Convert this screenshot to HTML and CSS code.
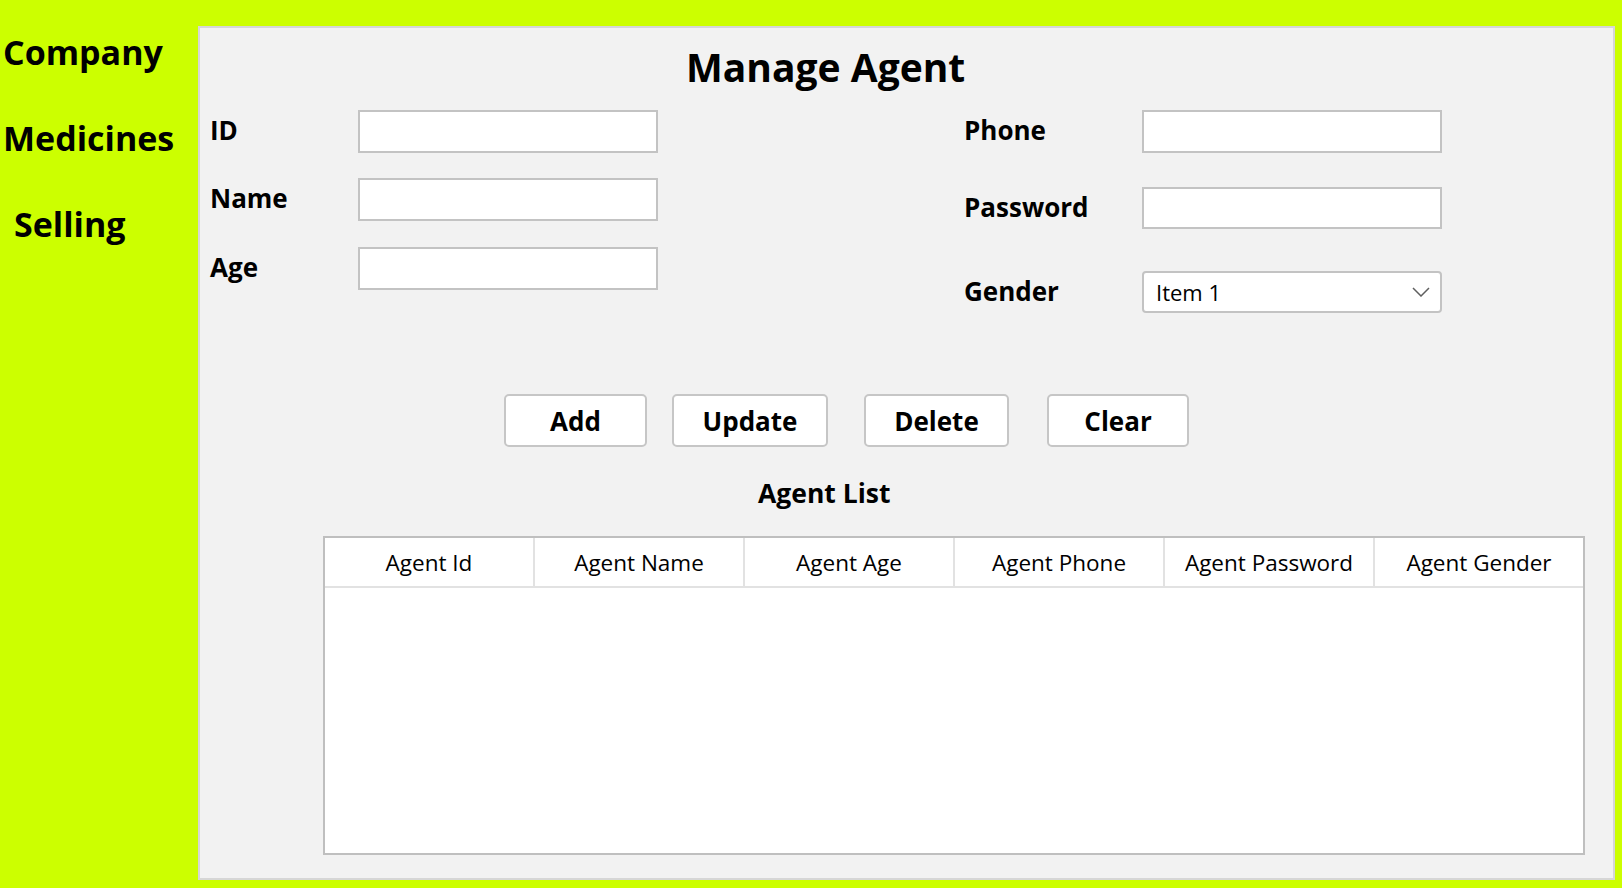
FILE: index.html
```html
<!DOCTYPE html>
<html lang="en">
<head>
<meta charset="utf-8">
<title>Manage Agent</title>
<link rel="stylesheet" href="styles.css">
</head>
<body>
<div class="app">
  <nav class="sidebar">
    <div class="nav-item">Company</div>
    <div class="nav-item">Medicines</div>
    <div class="nav-item nav-indent">Selling</div>
  </nav>
  <main class="panel">
    <h1 class="title">Manage Agent</h1>
    <div class="form">
      <div class="col col-left">
        <div class="row row-l1"><label class="label lbl-left">ID</label><div class="input"></div></div>
        <div class="row row-l2"><label class="label lbl-left">Name</label><div class="input"></div></div>
        <div class="row row-l3"><label class="label lbl-left">Age</label><div class="input"></div></div>
      </div>
      <div class="col col-right">
        <div class="row row-r1"><label class="label lbl-right">Phone</label><div class="input"></div></div>
        <div class="row row-r2"><label class="label lbl-right">Password</label><div class="input"></div></div>
        <div class="row row-r3"><label class="label lbl-right">Gender</label>
          <div class="combo"><span class="combo-text">Item 1</span>
            <svg class="chev" width="18" height="10" viewBox="0 0 18 10"><polyline points="1,1 9,9 17,1" fill="none" stroke="#5f5f5f" stroke-width="1.5"/></svg>
          </div>
        </div>
      </div>
    </div>
    <div class="buttons">
      <button class="btn btn-add">Add</button>
      <button class="btn btn-update">Update</button>
      <button class="btn btn-delete">Delete</button>
      <button class="btn btn-clear">Clear</button>
    </div>
    <div class="list-title">Agent List</div>
    <div class="table">
      <div class="thead">
        <div class="th">Agent Id</div>
        <div class="th">Agent Name</div>
        <div class="th">Agent Age</div>
        <div class="th">Agent Phone</div>
        <div class="th">Agent Password</div>
        <div class="th">Agent Gender</div>
      </div>
      <div class="tbody"></div>
    </div>
  </main>
</div>
</body>
</html>
```

FILE: styles.css
```css
html, body {
  margin: 0;
  padding: 0;
}
body {
  background: #ccff00;
  font-family: "Open Sans", "Noto Sans", sans-serif;
  color: #000;
  width: 1622px;
  height: 888px;
  overflow: hidden;
}
.app {
  display: flex;
  height: 888px;
}
.sidebar {
  width: 198px;
  flex: none;
  display: flex;
  flex-direction: column;
  padding-top: 9px;
  box-sizing: border-box;
}
.nav-item {
  height: 86px;
  line-height: 86px;
  font-size: 34px;
  font-weight: 700;
  padding-left: 3px;
  white-space: nowrap;
}
.nav-indent {
  padding-left: 14px;
}
.panel {
  margin-top: 26px;
  width: 1417px;
  height: 854px;
  box-sizing: border-box;
  border: 2px solid #d6d6d6;
  background: #f2f2f2;
  padding-left: 9px;
  flex: none;
}
.title {
  margin: 11px 0 0 0;
  height: 56px;
  line-height: 56px;
  font-size: 39px;
  font-weight: 700;
  padding-left: 477px;
  white-space: nowrap;
}
.form {
  display: flex;
  margin-top: 15px;
}
.col {
  display: flex;
  flex-direction: column;
}
.col-left {
  width: 754px;
}
.row {
  display: flex;
  align-items: center;
}
.row-l2 { margin-top: 25px; }
.row-l3 { margin-top: 26px; }
.row-r2 { margin-top: 34px; }
.row-r3 { margin-top: 42px; }
.label {
  font-size: 26px;
  font-weight: 700;
  white-space: nowrap;
  padding-bottom: 3px;
  padding-left: 1px;
  box-sizing: border-box;
}
.lbl-left { width: 149px; }
.lbl-right { width: 179px; }
.input {
  width: 300px;
  height: 43px;
  box-sizing: border-box;
  border: 2px solid #c3c3c3;
  background: #fff;
}
.row-r2 .input { height: 42px; }
.combo {
  width: 300px;
  height: 42px;
  box-sizing: border-box;
  border: 2px solid #c3c3c3;
  border-radius: 4px;
  background: #fff;
  display: flex;
  align-items: center;
  justify-content: space-between;
  padding: 0 10px 0 12px;
}
.combo-text {
  font-size: 22px;
  font-weight: 400;
}
.chev {
  display: block;
}
.buttons {
  display: flex;
  margin-top: 81px;
  padding-left: 295px;
}
.btn {
  height: 53px;
  box-sizing: border-box;
  border: 2px solid #c6c6c6;
  border-radius: 5px;
  background: #fff;
  font-family: "Open Sans", "Noto Sans", sans-serif;
  font-size: 26px;
  font-weight: 700;
  color: #000;
  padding: 0;
  margin: 0;
}
.btn-add { width: 143px; }
.btn-update { width: 156px; margin-left: 25px; }
.btn-delete { width: 145px; margin-left: 36px; }
.btn-clear { width: 142px; margin-left: 38px; }
.list-title {
  margin-top: 28px;
  height: 36px;
  line-height: 36px;
  padding-left: 549px;
  font-size: 26.5px;
  font-weight: 700;
}
.table {
  margin-top: 25px;
  margin-left: 114px;
  width: 1262px;
  height: 319px;
  box-sizing: border-box;
  border: 2px solid #bfbfbf;
  background: #fff;
}
.thead {
  display: grid;
  grid-template-columns: 208px repeat(5, 210px);
  height: 50px;
  box-sizing: border-box;
  border-bottom: 2px solid #e2e2e2;
}
.th {
  display: flex;
  align-items: center;
  justify-content: center;
  font-size: 22.5px;
  font-weight: 400;
  white-space: nowrap;
}
.th + .th {
  border-left: 2px solid #e2e2e2;
}
```
